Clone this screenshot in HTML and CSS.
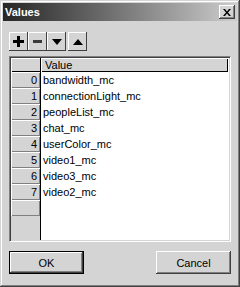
FILE: index.html
```html
<!DOCTYPE html>
<html>
<head>
<meta charset="UTF-8">
<meta name="viewport" content="width=device-width, initial-scale=1.0">
<title>Values</title>
<link rel="stylesheet" href="styles.css">
</head>
<body>
<div class="window">
  <div class="titlebar">
    <span class="title">Values</span>
    <div class="close">
      <svg width="8" height="7" viewBox="0 0 8 7">
        <path d="M0 0h2l2 2.5 2-2.5h2l-3 3.5 3 3.5h-2l-2-2.5-2 2.5h-2l3-3.5z" fill="#000"/>
      </svg>
    </div>
  </div>

  <div class="content">
    <div class="toolbar">
      <div class="tool">
        <svg width="11" height="11" viewBox="0 0 11 11"><path d="M4 0h3v4h4v3h-4v4h-3v-4h-4v-3h4z" fill="#000"/></svg>
      </div>
      <div class="tool">
        <svg width="9" height="3" viewBox="0 0 9 3"><rect width="9" height="3" fill="#3a3a3a"/></svg>
      </div>
      <div class="tool">
        <svg width="10" height="6" viewBox="0 0 10 6"><path d="M0 0h10l-5 6z" fill="#000"/></svg>
      </div>
      <div class="tool tool-gap">
        <svg width="10" height="6" viewBox="0 0 10 6"><path d="M5 0l5 6h-10z" fill="#000"/></svg>
      </div>
    </div>

    <div class="grid">
      <div class="row-heads">
        <div class="corner"></div>
        <div class="row-head">0</div>
        <div class="row-head">1</div>
        <div class="row-head">2</div>
        <div class="row-head">3</div>
        <div class="row-head">4</div>
        <div class="row-head">5</div>
        <div class="row-head">6</div>
        <div class="row-head">7</div>
        <div class="row-head"></div>
      </div>
      <div class="cells">
        <div class="col-head">Value</div>
        <div class="cell">bandwidth_mc</div>
        <div class="cell">connectionLight_mc</div>
        <div class="cell">peopleList_mc</div>
        <div class="cell">chat_mc</div>
        <div class="cell">userColor_mc</div>
        <div class="cell">video1_mc</div>
        <div class="cell">video3_mc</div>
        <div class="cell">video2_mc</div>
      </div>
    </div>

    <div class="actions">
      <div class="btn btn-default"><span>OK</span></div>
      <div class="btn">Cancel</div>
    </div>
  </div>
</div>
</body>
</html>
```

FILE: styles.css
```css
body {
  margin: 0;
  padding: 0;
  background: #d4d4d4;
  font-family: "Liberation Sans", Arial, sans-serif;
  font-size: 11px;
  color: #000;
}

.window {
  width: 240px;
  height: 287px;
  box-sizing: border-box;
  padding: 3px;
  background: #d4d4d4;
  box-shadow: inset -1px -1px #404040, inset 1px 1px #d4d4d4,
              inset -2px -2px #808080, inset 2px 2px #fff;
}

.titlebar {
  height: 18px;
  display: flex;
  align-items: center;
  justify-content: space-between;
  padding: 0 2px;
  background: linear-gradient(to right, #262626, #6e6e6e 45%, #cdcdcd);
}

.title {
  color: #fff;
  font-weight: bold;
  font-size: 11px;
}

.close {
  width: 16px;
  height: 14px;
  box-sizing: border-box;
  display: flex;
  align-items: center;
  justify-content: center;
  background: #d4d4d4;
  box-shadow: inset -1px -1px #404040, inset 1px 1px #fff,
              inset -2px -2px #808080;
}

.content {
  padding: 11px 6px 0 6px;
}

.toolbar {
  display: flex;
  height: 19px;
  margin-bottom: 5px;
}

.tool {
  width: 19px;
  height: 19px;
  box-sizing: border-box;
  display: flex;
  align-items: center;
  justify-content: center;
  background: #d4d4d4;
  box-shadow: inset -1px -1px #404040, inset 1px 1px #fff;
}

.tool-gap {
  margin-left: 2px;
}

.grid {
  height: 186px;
  box-sizing: border-box;
  display: flex;
  border-style: solid;
  border-width: 1px;
  border-color: #808080 #fff #fff #808080;
  box-shadow: inset 1px 1px #404040, inset -1px -1px #d4d4d4;
  padding: 1px;
  background: #fff;
}

.row-heads {
  width: 29px;
  border-right: 1px solid #000;
  background: #d4d4d4;
}

.corner {
  height: 14px;
  box-sizing: border-box;
  box-shadow: inset 1px 1px #fff, inset 0 -1px #000;
}

.row-head {
  height: 16px;
  line-height: 16px;
  box-sizing: border-box;
  padding-right: 3px;
  text-align: right;
  box-shadow: inset 1px 1px #fff, inset -1px -1px #808080;
}

.cells {
  flex: 1;
  margin-right: 1px;
}

.col-head {
  height: 14px;
  line-height: 14px;
  box-sizing: border-box;
  padding-left: 4px;
  background: #d4d4d4;
  box-shadow: inset 1px 1px #fff, inset -1px -1px #000;
  font-family: "Liberation Sans Narrow", "Liberation Sans", Arial, sans-serif;
}

.cell {
  height: 16px;
  line-height: 16px;
  padding-left: 2px;
  font-family: "Liberation Sans Narrow", "Liberation Sans", Arial, sans-serif;
}

.actions {
  display: flex;
  justify-content: space-between;
  margin-top: 9px;
}

.btn {
  width: 75px;
  height: 23px;
  box-sizing: border-box;
  display: flex;
  align-items: center;
  justify-content: center;
  background: #d4d4d4;
  box-shadow: inset -1px -1px #404040, inset 1px 1px #fff,
              inset -2px -2px #808080;
}

.btn-default {
  border: 1px solid #000;
  box-shadow: inset -1px -1px #404040, inset 1px 1px #fff,
              inset -2px -2px #808080;
}
```
